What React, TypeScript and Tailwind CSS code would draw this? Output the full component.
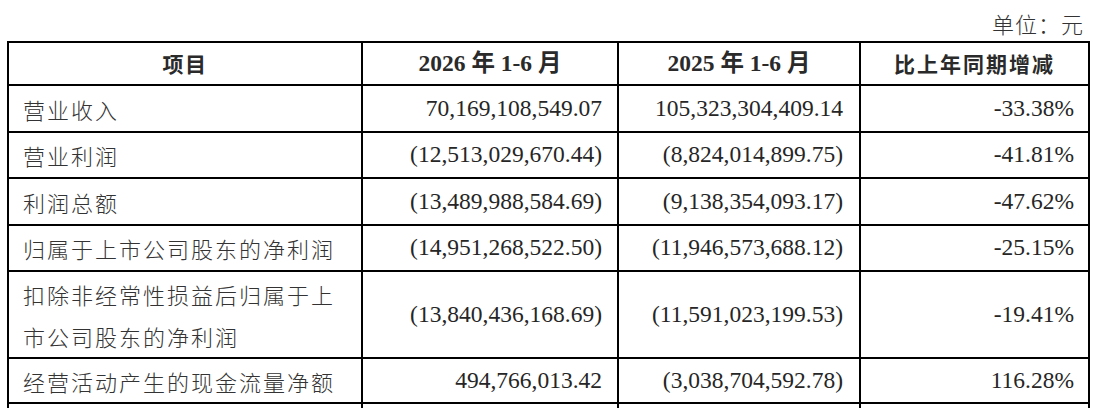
import React from "react";

const cjk = "font-['Noto_Sans_CJK_SC',sans-serif]";
const num = "font-['Liberation_Serif','Noto_Sans_CJK_SC',serif]";

type Row = { label: string[]; a: string; b: string; c: string; h: string };

const rows: Row[] = [
  { label: ["营业收入"], a: "70,169,108,549.07", b: "105,323,304,409.14", c: "-33.38%", h: "h-[47px]" },
  { label: ["营业利润"], a: "(12,513,029,670.44)", b: "(8,824,014,899.75)", c: "-41.81%", h: "h-[46px]" },
  { label: ["利润总额"], a: "(13,489,988,584.69)", b: "(9,138,354,093.17)", c: "-47.62%", h: "h-[47px]" },
  { label: ["归属于上市公司股东的净利润"], a: "(14,951,268,522.50)", b: "(11,946,573,688.12)", c: "-25.15%", h: "h-[46px]" },
  { label: ["扣除非经常性损益后归属于上", "市公司股东的净利润"], a: "(13,840,436,168.69)", b: "(11,591,023,199.53)", c: "-19.41%", h: "h-[87px]" },
  { label: ["经营活动产生的现金流量净额"], a: "494,766,013.42", b: "(3,038,704,592.78)", c: "116.28%", h: "h-[45px]" },
];

export default function App() {
  return (
    <div className="w-[1096px] h-[408px] overflow-hidden bg-white text-[#262626]">
      <div className={`h-[41px] flex items-end justify-end pr-[12px] pb-[3px] text-[22px] leading-[30px] tracking-[1px] text-[#333] ${cjk} font-light`}>
        单位：元
      </div>
      <table className="ml-[7px] w-[1081px] table-fixed border-collapse">
        <colgroup>
          <col className="w-[354px]" />
          <col className="w-[256px]" />
          <col className="w-[242px]" />
          <col className="w-[229px]" />
        </colgroup>
        <thead>
          <tr className="h-[43px]">
            <th className={`border-2 border-black text-center text-[21px] font-bold tracking-[1.5px] ${cjk} text-[#2a2a2a]`}>项目</th>
            <th className={`border-2 border-black text-center text-[23.5px] font-bold ${num} text-[#2a2a2a]`}>2026 年 1-6 月</th>
            <th className={`border-2 border-black text-center text-[23.5px] font-bold ${num} text-[#2a2a2a]`}>2025 年 1-6 月</th>
            <th className={`border-2 border-black text-center text-[21px] font-bold tracking-[2px] ${cjk} text-[#2a2a2a]`}>比上年同期增减</th>
          </tr>
        </thead>
        <tbody>
          {rows.map((r, i) => (
            <tr key={i} className={r.h}>
              <td className={`border-2 border-black pl-[14px] text-left text-[22px] font-light leading-[42px] tracking-[2px] text-[#333] ${cjk}`}>
                {r.label.map((l, j) => (
                  <div key={j}>{l}</div>
                ))}
              </td>
              <td className={`border-2 border-black pr-[15px] text-right text-[23.5px] ${num}`}>{r.a}</td>
              <td className={`border-2 border-black pr-[16px] text-right text-[23.5px] ${num}`}>{r.b}</td>
              <td className={`border-2 border-black pr-[14px] text-right text-[23.5px] ${num}`}>{r.c}</td>
            </tr>
          ))}
          <tr className="h-[46px]">
            <td className="border-2 border-black"></td>
            <td className="border-2 border-black"></td>
            <td className="border-2 border-black"></td>
            <td className="border-2 border-black"></td>
          </tr>
        </tbody>
      </table>
    </div>
  );
}
